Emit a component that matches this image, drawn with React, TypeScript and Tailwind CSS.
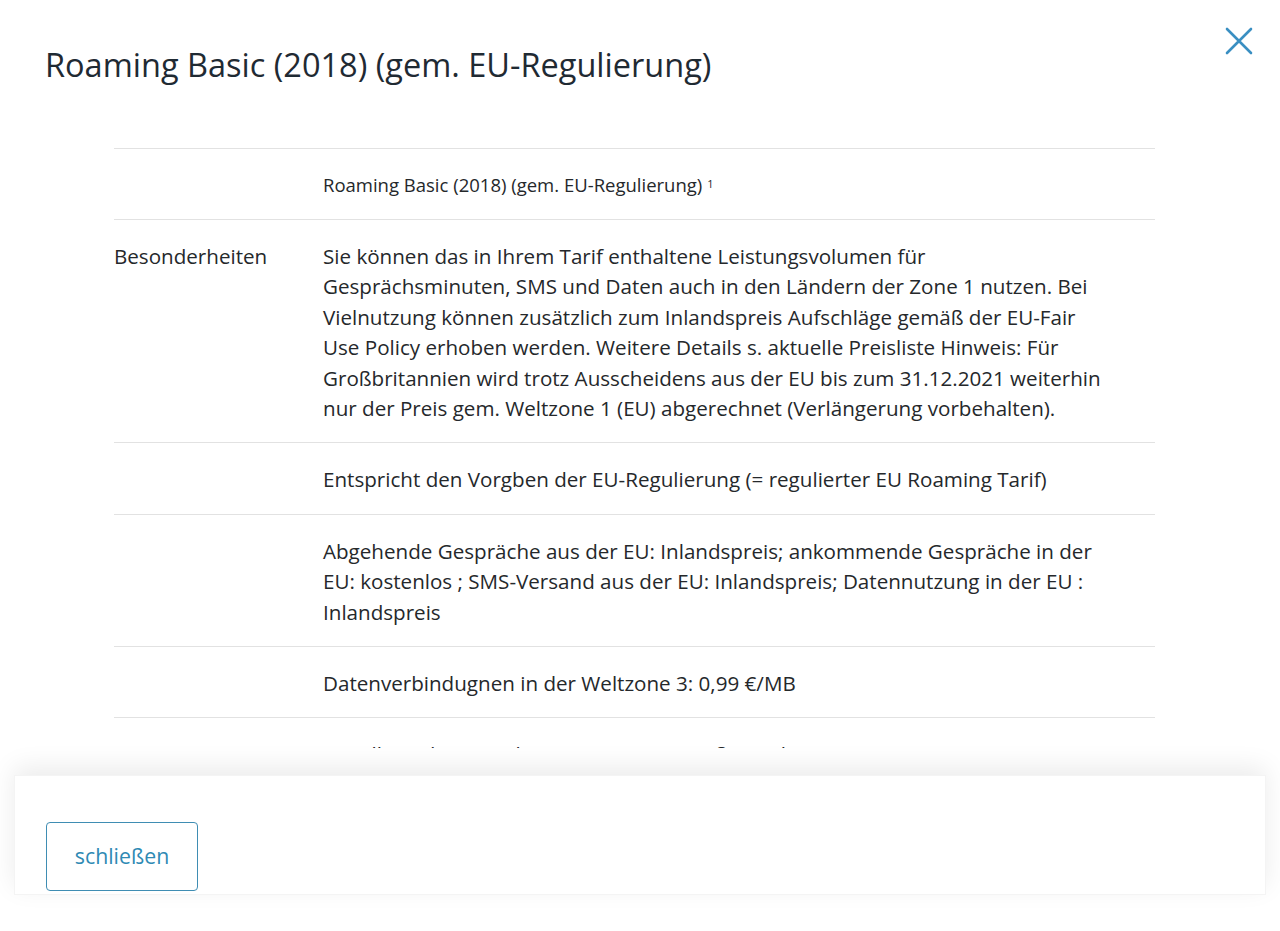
import React from "react";

const rows: { label?: string; lines: string[]; small?: boolean }[] = [
  { small: true, lines: ["Roaming Basic (2018) (gem. EU-Regulierung)"] },
  {
    label: "Besonderheiten",
    lines: [
      "Sie können das in Ihrem Tarif enthaltene Leistungsvolumen für",
      "Gesprächsminuten, SMS und Daten auch in den Ländern der Zone 1 nutzen. Bei",
      "Vielnutzung können zusätzlich zum Inlandspreis Aufschläge gemäß der EU-Fair",
      "Use Policy erhoben werden. Weitere Details s. aktuelle Preisliste Hinweis: Für",
      "Großbritannien wird trotz Ausscheidens aus der EU bis zum 31.12.2021 weiterhin",
      "nur der Preis gem. Weltzone 1 (EU) abgerechnet (Verlängerung vorbehalten).",
    ],
  },
  { lines: ["Entspricht den Vorgben der EU-Regulierung (= regulierter EU Roaming Tarif)"] },
  {
    lines: [
      "Abgehende Gespräche aus der EU: Inlandspreis; ankommende Gespräche in der",
      "EU: kostenlos ; SMS-Versand aus der EU: Inlandspreis; Datennutzung in der EU :",
      "Inlandspreis",
    ],
  },
  { lines: ["Datenverbindugnen in der Weltzone 3: 0,99 €/MB"] },
  { lines: ["Für alle anderen Weltzonen: Preise gemäß Preisliste"] },
];

export default function App() {
  return (
    <div
      className="relative w-full h-[931px] bg-white overflow-hidden flex flex-col text-[#25282b]"
      style={{ fontFamily: "'Open Sans', Lato, sans-serif" }}
    >
      <button className="absolute top-[27px] right-[27px] w-[28px] h-[28px] flex items-center justify-center">
        <svg width="28" height="28" viewBox="0 0 28 28">
          <path d="M2 2 L26 26 M26 2 L2 26" stroke="#3a8fc2" strokeWidth="2.6" strokeLinecap="round" fill="none" />
        </svg>
      </button>

      <div className="h-[748px] overflow-hidden shrink-0">
        <h1 className="pt-[45px] pl-[45px] text-[32.5px] leading-[40px] font-normal text-[#1f2a33] mb-[63px]">
          Roaming Basic (2018) (gem. EU-Regulierung)
        </h1>
        <div className="ml-[114px] w-[1041px]">
          {rows.map((r, i) => (
            <div key={i} className="grid grid-cols-[209px_1fr] border-t border-[#e2e2e2] pt-[21px] pb-[19px]">
              <div className="text-[20.6px] leading-[30px]">{r.label ?? ""}</div>
              {r.small ? (
                <div className="text-[18.5px] leading-[30px] whitespace-nowrap">
                  {r.lines[0]}
                  <sup className="text-[11px] ml-[5px] relative -top-[4px]">1</sup>
                </div>
              ) : (
                <div className="text-[20.6px] leading-[30.4px] whitespace-nowrap">
                  {r.lines.map((l, j) => (
                    <div key={j}>{l}</div>
                  ))}
                </div>
              )}
            </div>
          ))}
        </div>
      </div>

      <div className="h-[27px] shrink-0" />
      <div className="relative mx-[14px] h-[120px] shrink-0 bg-white border border-[#f4f4f4] shadow-[0_-8px_24px_rgba(0,0,0,0.08)] pt-[46px] pl-[31px]">
        <button className="w-[152px] h-[69px] rounded-[4px] border-[1.5px] border-[#3f8db3] text-[21.3px] leading-[24px] pb-[2px] text-[#2f8ab4] bg-white">
          schließen
        </button>
      </div>
    </div>
  );
}
